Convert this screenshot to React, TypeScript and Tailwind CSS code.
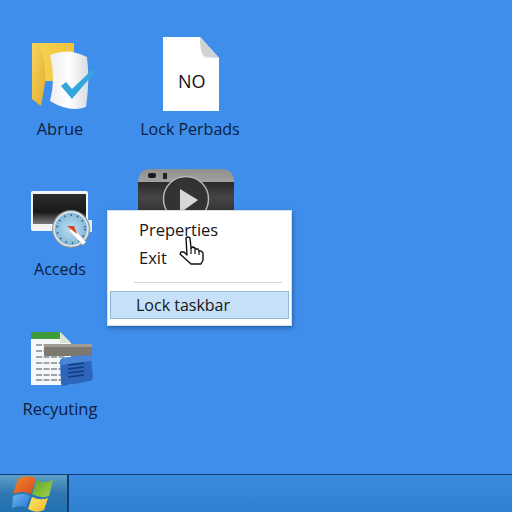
import React from "react";

const font = "[font-family:'Open_Sans','Noto_Sans',sans-serif]";

function FolderCheck() {
  return (
    <svg width="70" height="72" viewBox="0 0 70 72">
      <defs>
        <linearGradient id="fa" x1="0" y1="0" x2="1" y2="0">
          <stop offset="0" stopColor="#f6d454" />
          <stop offset="1" stopColor="#f1c23c" />
        </linearGradient>
        <linearGradient id="fb" x1="0" y1="0" x2="1" y2="0">
          <stop offset="0" stopColor="#eeeef0" />
          <stop offset="0.5" stopColor="#ffffff" />
          <stop offset="1" stopColor="#d8dbe0" />
        </linearGradient>
        <linearGradient id="fc" x1="0" y1="0" x2="1" y2="1">
          <stop offset="0" stopColor="#f7d55c" />
          <stop offset="1" stopColor="#e2ac30" />
        </linearGradient>
      </defs>
      <path d="M2 2 H44 V40 H2 Z" fill="url(#fa)" />
      <path d="M2 2 L8 2 Q17 22 15 42 L11 65 L2 58 Z" fill="url(#fc)" />
      <path d="M20 14 Q38 6 57 16 Q60 40 56 66 Q40 72 20 60 Q26 38 20 14 Z" fill="url(#fb)" />
      <path d="M31 45 L36 41 L42 48 L63 28 L65 31 L42 58 Z" fill="#35a6dc" />
    </svg>
  );
}

function Doc() {
  return (
    <svg width="58" height="76" viewBox="0 0 58 76">
      <path d="M1 1 H38 L57 22 V75 H1 Z" fill="#ffffff" />
      <path d="M38 1 Q38 18 42 22 L57 22 Z" fill="#e4e6e8" />
      <path d="M38 1 L57 22 L42 20 Q38 16 38 1 Z" fill="#d0d3d6" />
    </svg>
  );
}

function Monitor() {
  return (
    <svg width="64" height="62" viewBox="0 0 64 62">
      <defs>
        <linearGradient id="ms" x1="0" y1="0" x2="0" y2="1">
          <stop offset="0" stopColor="#2b2c2e" />
          <stop offset="0.6" stopColor="#1a1a1a" />
          <stop offset="1" stopColor="#77797a" />
        </linearGradient>
        <radialGradient id="md">
          <stop offset="0" stopColor="#bfe0f3" />
          <stop offset="1" stopColor="#7db7da" />
        </radialGradient>
      </defs>
      <rect x="1" y="1" width="57" height="40" rx="2" fill="#f2f3f5" />
      <rect x="3" y="4" width="53" height="30" fill="url(#ms)" />
      <rect x="58" y="30" width="4" height="12" fill="#e4e7ea" />
      <circle cx="41" cy="39" r="19" fill="#8b9298" />
      <circle cx="41" cy="39" r="17" fill="url(#md)" stroke="#e7edf1" strokeWidth="1.5" />
      <circle cx="41" cy="39" r="14" fill="none" stroke="#55636e" strokeWidth="2" strokeDasharray="1.5 5" />
      <path d="M42 36 L56 52 L53 55 L39 41 Z" fill="#ffffff" stroke="#9aa3a9" strokeWidth="0.5" />
      <path d="M37 36 L44 36 L47 44 Z" fill="#d9421e" />
    </svg>
  );
}

function Camera() {
  return (
    <svg width="96" height="44" viewBox="0 0 96 44">
      <defs>
        <linearGradient id="ct" x1="0" y1="0" x2="0" y2="1">
          <stop offset="0" stopColor="#8f8f8d" />
          <stop offset="1" stopColor="#cfcfcb" />
        </linearGradient>
        <linearGradient id="cb" x1="0" y1="0" x2="0" y2="1">
          <stop offset="0" stopColor="#2a2a2a" />
          <stop offset="0.5" stopColor="#454545" />
          <stop offset="1" stopColor="#333" />
        </linearGradient>
      </defs>
      <path d="M0 44 V12 Q1 1 10 0 H86 Q95 1 96 12 V44 Z" fill="url(#ct)" />
      <rect x="0" y="13" width="96" height="31" fill="url(#cb)" />
      <rect x="10" y="4" width="8" height="5" rx="2" fill="#1c1c1c" />
      <rect x="25" y="4" width="4" height="6" fill="#222" />
      <circle cx="48" cy="30" r="22.5" fill="#333" stroke="#b8b8b8" strokeWidth="1.5" />
      <path d="M42 20 L60 31 L42 44 Z" fill="#d8d8d8" />
    </svg>
  );
}

function Sheet() {
  return (
    <svg width="64" height="56" viewBox="0 0 64 56">
      <path d="M1 1 H30 L41 12 V54 H1 Z" fill="#f4f6f8" />
      <path d="M1 1 H30 L35 8 H1 Z" fill="#3f9c3c" />
      <path d="M30 1 L41 12 H30 Z" fill="#d9e3d5" />
      {[14, 20, 26, 32, 38, 44, 49].map((y) => (
        <path key={y} d="M6 0 H36" transform={`translate(0 ${y})`} stroke="#7f8a94" strokeWidth="1.6" strokeDasharray="6 1.5" />
      ))}
      <rect x="14" y="13" width="48" height="12" rx="1" fill="#7d7971" />
      <rect x="14" y="13" width="48" height="3" fill="#a09c94" />
      <path d="M30 30 Q30 28 33 27 L58 24 Q60 24 61 27 L63 46 Q63 49 60 50 L33 55 Q31 55 31 52 Z" fill="#2e66bd" />
      <path d="M30 30 Q30 28 33 27 L58 24 Q60 24 61 27 L61 30 L31 34 Z" fill="#4b85d8" />
      {[33, 37, 41, 45].map((y) => (
        <path key={y} d={`M38 ${y + 1} L54 ${y - 1}`} stroke="#123a7c" strokeWidth="1.6" />
      ))}
    </svg>
  );
}

function Hand() {
  return (
    <svg width="26" height="30" viewBox="0 0 26 30">
      <path
        d="M7 2 Q9 0 11 2 L12 12 L14 11 L16 12 L17 13 L19 13 L20 15 L22 15 L24 17 L24 24 L22 28 L12 28 L1 18 L2 16 L5 16 L8 19 Z"
        fill="#ffffff"
        stroke="#111"
        strokeWidth="1.4"
        strokeLinejoin="round"
      />
      <path d="M12 12 V18 M16 12 V18 M20 15 V19" stroke="#111" strokeWidth="1.2" />
    </svg>
  );
}

function WinLogo() {
  return (
    <svg width="42" height="37" viewBox="0 0 42 37">
      <defs>
        <linearGradient id="wr" x1="0" y1="0" x2="1" y2="1">
          <stop offset="0" stopColor="#f08a2c" />
          <stop offset="1" stopColor="#d8481c" />
        </linearGradient>
        <linearGradient id="wg" x1="0" y1="0" x2="1" y2="1">
          <stop offset="0" stopColor="#5fa32a" />
          <stop offset="1" stopColor="#a3d24a" />
        </linearGradient>
        <linearGradient id="wb" x1="0" y1="0" x2="1" y2="1">
          <stop offset="0" stopColor="#6db4f0" />
          <stop offset="1" stopColor="#2a78d0" />
        </linearGradient>
        <linearGradient id="wy" x1="0" y1="0" x2="1" y2="1">
          <stop offset="0" stopColor="#fbe46a" />
          <stop offset="1" stopColor="#f2b92a" />
        </linearGradient>
      </defs>
      <path d="M6 4 Q14 -1 24 3 L19 19 Q11 15 1 19 Z" fill="url(#wr)" />
      <path d="M25 5 Q32 9 41 5 L37 21 Q29 24 20 19 Z" fill="url(#wg)" />
      <path d="M1 21 Q10 17 18 21 L14 32 Q6 30 0 33 Z" fill="url(#wb)" />
      <path d="M20 22 Q28 26 36 23 L32 35 Q24 39 16 34 Z" fill="url(#wy)" />
    </svg>
  );
}

export default function App() {
  return (
    <div className={`relative flex flex-col w-[512px] h-[512px] overflow-hidden bg-[#3f8eeb] ${font}`}>
      <div className="flex-1 grid grid-cols-[120px_120px] grid-rows-[140px_140px_140px] gap-x-[10px] content-start">
        <div className="flex flex-col items-center h-[140px] pt-[41px]">
          <div className="ml-[10px]"><FolderCheck /></div>
          <span className="mt-[5px] text-[16.5px] leading-[22px] text-[#0d1d3d]">Abrue</span>
        </div>
        <div className="flex flex-col items-center h-[140px] pt-[36px]">
          <div className="relative ml-[2px]">
            <Doc />
            <span className="absolute left-[16px] top-[34px] text-[18px] leading-[22px] text-[#111]">NO</span>
          </div>
          <span className="mt-[6px] text-[16px] leading-[22px] text-[#0d1d3d] whitespace-nowrap">Lock Perbads</span>
        </div>
        <div className="flex flex-col items-center h-[140px] pt-[50px]">
          <div className="ml-[4px]"><Monitor /></div>
          <span className="mt-[6px] text-[16px] leading-[22px] text-[#0d1d3d]">Acceds</span>
        </div>
        <div className="flex flex-col items-center h-[140px] pt-[29px] -ml-[8px]">
          <Camera />
        </div>
        <div className="flex flex-col items-center h-[140px] pt-[51px]">
          <div className="ml-[3px]"><Sheet /></div>
          <span className="mt-[11px] text-[16.5px] leading-[22px] text-[#0d1d3d]">Recyuting</span>
        </div>
      </div>

      <div className="h-[38px] flex border-t border-[#123f73] bg-gradient-to-b from-[#3b8ce0] to-[#2f7fd2]">
        <div className="w-[69px] border-r-2 border-[#123f73] bg-gradient-to-b from-[#5d9fc7] via-[#2f78b0] to-[#2070b0] pl-[12px]">
          <WinLogo />
        </div>
      </div>

      <div className="absolute left-[107px] top-[210px] w-[185px] h-[116px] bg-white border border-[#d5dfe8] shadow-[1px_2px_4px_rgba(10,40,90,0.45)] flex flex-col">
        <div className="pl-[31px] pt-[8px] text-[16.5px] leading-[22px] text-[#161616]">Preperties</div>
        <div className="pl-[31px] pt-[6px] text-[16.5px] leading-[22px] text-[#161616]">Exit</div>
        <div className="ml-[26px] mr-[9px] mt-[13px] h-px bg-[#d4d4d4]" />
        <div className="mx-[2px] mt-[8px] h-[28px] pl-[25px] bg-[#c5e0f7] border border-[#8fb8d6] text-[16px] leading-[26px] text-[#161616]">Lock taskbar</div>
        <div className="absolute left-[71px] top-[25px]"><Hand /></div>
      </div>
    </div>
  );
}
